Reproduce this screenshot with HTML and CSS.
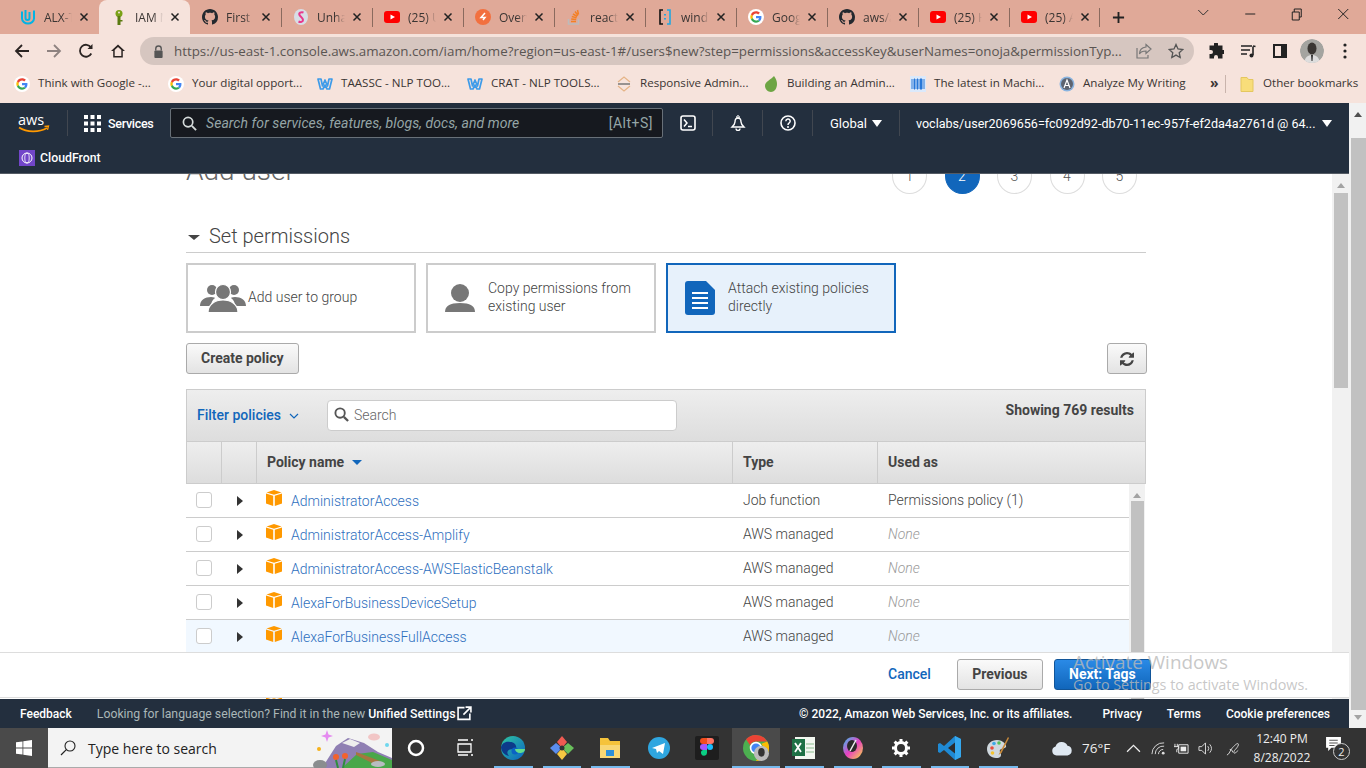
FILE: index.html
```html
<!DOCTYPE html>
<html lang="en">
<head>
<meta charset="utf-8">
<title>IAM Management Console</title>
<link rel="stylesheet" href="styles.css">
</head>
<body>
<svg class="defs" aria-hidden="true">
  <symbol id="i-gh" viewBox="0 0 16 16"><path fill="#24292f" d="M8 0C3.58 0 0 3.58 0 8c0 3.54 2.29 6.53 5.47 7.59.4.07.55-.17.55-.38 0-.19-.01-.82-.01-1.49-2.01.37-2.53-.49-2.69-.94-.09-.23-.48-.94-.82-1.13-.28-.15-.68-.52-.01-.53.63-.01 1.08.58 1.23.82.72 1.21 1.87.87 2.33.66.07-.52.28-.87.51-1.07-1.78-.2-3.64-.89-3.64-3.95 0-.87.31-1.59.82-2.15-.08-.2-.36-1.02.08-2.12 0 0 .67-.21 2.2.82.64-.18 1.32-.27 2-.27.68 0 1.36.09 2 .27 1.53-1.04 2.2-.82 2.2-.82.44 1.1.16 1.92.08 2.12.51.56.82 1.27.82 2.15 0 3.07-1.87 3.75-3.65 3.95.29.25.54.73.54 1.48 0 1.07-.01 1.93-.01 2.2 0 .21.15.46.55.38A8.013 8.013 0 0016 8c0-4.42-3.58-8-8-8z"/></symbol>
  <symbol id="i-yt" viewBox="0 0 16 16"><rect y="2" width="16" height="12" rx="3" fill="#f00"/><path fill="#fff" d="M6.5 5.5v5L11 8z"/></symbol>
  <symbol id="i-g" viewBox="0 0 48 48"><circle cx="24" cy="24" r="24" fill="#fff"/><g transform="translate(7 7) scale(.71)"><path fill="#EA4335" d="M24 9.5c3.5 0 6.7 1.2 9.2 3.6l6.9-6.9C35.9 2.4 30.5 0 24 0 14.6 0 6.5 5.4 2.6 13.2l8 6.2C12.4 13.7 17.7 9.5 24 9.5z"/><path fill="#4285F4" d="M46.98 24.55c0-1.57-.15-3.09-.38-4.55H24v9.02h12.94c-.58 2.96-2.26 5.48-4.78 7.18l7.73 6c4.51-4.18 7.09-10.36 7.09-17.65z"/><path fill="#FBBC05" d="M10.53 28.59A14.5 14.5 0 0 1 9.77 24c0-1.6.27-3.14.76-4.59l-7.98-6.19A23.9 23.9 0 0 0 0 24c0 3.88.92 7.54 2.56 10.78z"/><path fill="#34A853" d="M24 48c6.48 0 11.93-2.13 15.89-5.81l-7.73-6c-2.15 1.45-4.92 2.3-8.16 2.3-6.26 0-11.57-4.22-13.47-9.91l-7.98 6.19C6.51 42.62 14.62 48 24 48z"/></g></symbol>
  <symbol id="i-w" viewBox="0 0 16 16"><path fill="none" stroke="#3d9be9" stroke-width="1.700" stroke-linejoin="round" d="M1 3h3l1.500 7 2.500-6 2.500 6L12 3h3l-2.500 10H10L8 9l-2 4H3.500z"/></symbol>
  <symbol id="i-close" viewBox="0 0 10 10"><path d="M1.5 1.5l7 7M8.5 1.5l-7 7" stroke="#222" stroke-width="1.5" fill="none"/></symbol>
  <symbol id="i-cube" viewBox="0 0 16 16"><path fill="#f90" d="M8 0l7.5 2.4L8 4.8.5 2.4z"/><path fill="#f90" d="M0 3.4l7.2 2.3V16L0 13.6zM16 3.4L8.8 5.7V16l7.2-2.4z"/></symbol>
  <symbol id="i-caret" viewBox="0 0 8 10"><path fill="#333" d="M1 0l6 5-6 5z"/></symbol>
</svg>

<header class="tabstrip">
  <div class="tab"><svg class="fav" viewBox="0 0 16 16"><path fill="none" stroke="#02b3e4" stroke-width="2" d="M2 2.5v7c0 3 3 5 6 5s6-2 6-5v-8"/><path fill="none" stroke="#02b3e4" stroke-width="2" d="M5.5 1v8c0 1.500 1 2 2 2s2-.5 2-2V3"/></svg><span class="tab-title">ALX-T</span><svg class="tab-x"><use href="#i-close"/></svg></div>
  <div class="tab tab-active"><svg class="fav" viewBox="0 0 16 16"><circle cx="8" cy="4.500" r="3.500" fill="#7aa116"/><rect x="6.500" y="7" width="3" height="9" fill="#5a7a10"/><rect x="9" y="11" width="2.500" height="1.500" fill="#5a7a10"/><circle cx="8" cy="3.500" r="1" fill="#f6e3dc"/></svg><span class="tab-title">IAM M</span><svg class="tab-x"><use href="#i-close"/></svg></div>
  <div class="tab"><svg class="fav"><use href="#i-gh"/></svg><span class="tab-title">First C</span><svg class="tab-x"><use href="#i-close"/></svg></div>
  <div class="tab tab-sep"><svg class="fav" viewBox="0 0 16 16"><ellipse cx="8" cy="8" rx="7" ry="8" fill="#d8dde6"/><path fill="none" stroke="#e8388c" stroke-width="2" d="M10.500 3.500C8 2.500 5.500 4 6.500 6c1 2 3.500 2.500 3.500 5 0 2-2.500 2.500-4.500 1.500"/></svg><span class="tab-title">Unhandled</span><svg class="tab-x"><use href="#i-close"/></svg></div>
  <div class="tab tab-sep"><svg class="fav"><use href="#i-yt"/></svg><span class="tab-title">(25) U</span><svg class="tab-x"><use href="#i-close"/></svg></div>
  <div class="tab tab-sep"><svg class="fav" viewBox="0 0 16 16"><circle cx="8" cy="8" r="8" fill="#f2703f"/><path fill="none" stroke="#fff" stroke-width="1.500" d="M10 4L6 8.500h4L8 11"/></svg><span class="tab-title">Overview</span><svg class="tab-x"><use href="#i-close"/></svg></div>
  <div class="tab tab-sep"><svg class="fav" viewBox="0 0 16 16"><path fill="none" stroke="#bcbbbb" stroke-width="1.500" d="M2.500 10v5h10v-5"/><path fill="none" stroke="#f48024" stroke-width="1.500" d="M5 12.500h5M5.200 10l5 .6M5.800 7.500l4.800 1.400M7 5l4.200 2.500M9 2.500l3 4M11.500 1l1 4.500"/></svg><span class="tab-title">react</span><svg class="tab-x"><use href="#i-close"/></svg></div>
  <div class="tab tab-sep"><svg class="fav" viewBox="0 0 16 16"><path fill="none" stroke="#111" stroke-width="1.600" d="M6 1H3v14h3"/><path fill="none" stroke="#22a7e0" stroke-width="1.600" d="M10 1h3v14h-3"/><path stroke="#22a7e0" stroke-width="2" d="M8 5v1.500M8 9v1.500"/></svg><span class="tab-title">windi</span><svg class="tab-x"><use href="#i-close"/></svg></div>
  <div class="tab tab-sep"><svg class="fav"><use href="#i-g"/></svg><span class="tab-title">Google</span><svg class="tab-x"><use href="#i-close"/></svg></div>
  <div class="tab tab-sep"><svg class="fav"><use href="#i-gh"/></svg><span class="tab-title">aws/a</span><svg class="tab-x"><use href="#i-close"/></svg></div>
  <div class="tab tab-sep"><svg class="fav"><use href="#i-yt"/></svg><span class="tab-title">(25) H</span><svg class="tab-x"><use href="#i-close"/></svg></div>
  <div class="tab tab-sep tab-end"><svg class="fav"><use href="#i-yt"/></svg><span class="tab-title">(25) A</span><svg class="tab-x"><use href="#i-close"/></svg></div>
  <svg class="newtab" viewBox="0 0 14 14"><path d="M7 1v12M1 7h12" stroke="#222" stroke-width="2"/></svg>
  <div class="winctl">
    <svg class="wc" viewBox="0 0 46 28"><path d="M18 10l5 5 5-5" fill="none" stroke="#333"/></svg>
    <svg class="wc" viewBox="0 0 46 28"><path d="M18 14h10" stroke="#222"/></svg>
    <svg class="wc" viewBox="0 0 46 28"><path d="M19 12h7v8h-7zM21 12V9h7v8h-2" fill="none" stroke="#222"/></svg>
    <svg class="wc" viewBox="0 0 46 28"><path d="M18 9l10 10M28 9L18 19" stroke="#222" fill="none"/></svg>
  </div>
</header>

<nav class="toolbar">
  <svg class="tb-ic" viewBox="0 0 16 16"><path d="M15 8H2M8 2L2 8l6 6" fill="none" stroke="#2b2422" stroke-width="1.800"/></svg>
  <svg class="tb-ic" viewBox="0 0 16 16"><path d="M1 8h13M8 2l6 6-6 6" fill="none" stroke="#8e8280" stroke-width="1.800"/></svg>
  <svg class="tb-ic" viewBox="0 0 16 16"><path d="M13.300 10.500A6 6 0 1 1 13 4.500" fill="none" stroke="#2b2422" stroke-width="1.800"/><path d="M14.500 1v5h-5z" fill="#2b2422"/></svg>
  <svg class="tb-ic" viewBox="0 0 16 16"><path d="M8 1.500L1 8h2.200v6.500h9.600V8H15zM8 4l3.300 3v6H4.700V7z" fill="#2b2422" fill-rule="evenodd"/></svg>
  <div class="omnibox">
    <svg class="lock" viewBox="0 0 12 14"><path d="M3 6V4a3 3 0 0 1 6 0v2" fill="none" stroke="#555" stroke-width="1.500"/><rect x="1.500" y="6" width="9" height="8" rx="1" fill="#555"/></svg>
    <span class="url">https://us-east-1.console.aws.amazon.com/iam/home?region=us-east-1#/users$new?step=permissions&amp;accessKey&amp;userNames=onoja&amp;permissionTyp...</span>
    <svg class="omni-ic" viewBox="0 0 16 16"><path d="M10 1.500L15 6l-5 4.500V8C6.500 8 4.500 9 3.500 11c0-4 2.500-6.500 6.500-7z" fill="none" stroke="#777" stroke-width="1.200"/><path d="M1 5v10h11v-3" fill="none" stroke="#777" stroke-width="1.200"/></svg>
    <svg class="omni-ic" viewBox="0 0 16 16"><path d="M8 1.500l2 4.500 4.800.5-3.600 3.200 1 4.800L8 12.100l-4.200 2.400 1-4.800L1.200 6.500 6 6z" fill="none" stroke="#555" stroke-width="1.300"/></svg>
  </div>
  <svg class="tb-ic tb-puzzle" viewBox="0 0 16 16"><path fill="#222" d="M6 1a2 2 0 0 1 4 0v1.500h4.500V7H16a2 2 0 0 1 0 4h-1.500v4.500H10V14a2 2 0 0 0-4 0v1.500H1.500V11H3a2 2 0 0 0 0-4H1.500V2.500H6z"/></svg>
  <svg class="tb-ic" viewBox="0 0 16 16"><path d="M1 3h11M1 7h9M1 11h6" stroke="#222" stroke-width="1.500"/><path d="M13 3.500V12" stroke="#222" stroke-width="1.600"/><circle cx="11.500" cy="12.500" r="2" fill="#222"/><path d="M13 3l2.500.5" stroke="#222" stroke-width="1.500"/></svg>
  <svg class="tb-ic" viewBox="0 0 16 16"><path fill="#222" fill-rule="evenodd" d="M1 1h14v14H1zm2 2v10h6V3z"/></svg>
  <svg class="avatar" viewBox="0 0 24 24"><circle cx="12" cy="12" r="12" fill="#a4a4a0"/><ellipse cx="12" cy="9.500" rx="4.500" ry="6" fill="#3a3633"/><path d="M4 24c1-6 4-8 8-8s7 2 8 8z" fill="#ddd"/><path d="M11 16h2l-.5 6h-1z" fill="#333"/></svg>
  <svg class="tb-dots" viewBox="0 0 4 16"><circle cx="2" cy="2" r="1.600" fill="#222"/><circle cx="2" cy="8" r="1.600" fill="#222"/><circle cx="2" cy="14" r="1.600" fill="#222"/></svg>
</nav>

<div class="bookmarks">
  <div class="bm"><svg class="bm-ic"><use href="#i-g"/></svg><span>Think with Google -...</span></div>
  <div class="bm"><svg class="bm-ic"><use href="#i-g"/></svg><span>Your digital opport...</span></div>
  <div class="bm"><svg class="bm-ic"><use href="#i-w"/></svg><span>TAASSC - NLP TOO...</span></div>
  <div class="bm"><svg class="bm-ic"><use href="#i-w"/></svg><span>CRAT - NLP TOOLS...</span></div>
  <div class="bm"><svg class="bm-ic" viewBox="0 0 16 16"><path d="M2 6l6-5 6 5M2 10l6 5 6-5" fill="none" stroke="#e5b487" stroke-width="1.200"/><path d="M2 8h12" stroke="#777" stroke-width="1.500"/></svg><span>Responsive Admin...</span></div>
  <div class="bm"><svg class="bm-ic" viewBox="0 0 16 16"><path fill="#6da544" d="M11 0c2 3 3 5 3 8 0 5-3 8-6 8s-6-3-6-6c0-5 6-6 9-10z"/></svg><span>Building an Admin...</span></div>
  <div class="bm"><svg class="bm-ic" viewBox="0 0 16 16"><rect width="16" height="16" fill="#dbe9fb"/><path d="M2 3v10M14 3v10M4 3h1v10H4zM7 3h1v10H7zM10 3h2v10h-2z" stroke="#2979d8" fill="#2979d8"/></svg><span>The latest in Machi...</span></div>
  <div class="bm"><svg class="bm-ic" viewBox="0 0 16 16"><circle cx="8" cy="8" r="7.500" fill="#8ab4e0"/><circle cx="8" cy="8" r="6" fill="#5d6470"/><path d="M5 12l3-8 3 8M6 9.500h4" fill="none" stroke="#fff" stroke-width="1.200"/></svg><span>Analyze My Writing</span></div>
  <div class="bm-more">»</div>
  <div class="bm bm-other"><svg class="bm-ic" viewBox="0 0 16 16"><path d="M2 1.500h6l1.500 2H14v12H2z" fill="#f8dd7a" stroke="#e4c75f"/></svg><span>Other bookmarks</span></div>
</div>

<div class="viewport">
  <div class="console">
    <div class="awsnav">
      <div class="nav-main">
        <svg class="awslogo" viewBox="0 0 32 20"><text x="0" y="11.500" class="awslogo-t">aws</text><path d="M1 14.500c8 5 20 5 28 .5" fill="none" stroke="#f90" stroke-width="1.700"/><path d="M26.500 13.500l4-.5-1 3.800" fill="none" stroke="#f90" stroke-width="1.300"/></svg>
        <span class="nav-sep nav-sep-a"></span>
        <svg class="gridic" viewBox="0 0 17 17"><path fill="#fff" d="M0 0h4v4H0zM6.500 0h4v4h-4zM13 0h4v4h-4zM0 6.500h4v4H0zM6.500 6.500h4v4h-4zM13 6.500h4v4h-4zM0 13h4v4H0zM6.500 13h4v4h-4zM13 13h4v4h-4z"/></svg>
        <span class="nav-services">Services</span>
        <div class="nav-search">
          <svg class="nav-search-ic" viewBox="0 0 16 16"><circle cx="6.500" cy="6.500" r="5" fill="none" stroke="#d5dbdb" stroke-width="1.800"/><path d="M10.500 10.500L15 15" stroke="#d5dbdb" stroke-width="2"/></svg>
          <span class="nav-search-ph">Search for services, features, blogs, docs, and more</span>
          <span class="nav-search-key">[Alt+S]</span>
        </div>
        <svg class="nav-ic nav-ic-shell" viewBox="0 0 16 16"><rect x="1" y="1" width="14" height="14" rx="2" fill="none" stroke="#fff" stroke-width="1.600"/><path d="M4 4.500L7 8l-3 3.500M8 11.500h4" fill="none" stroke="#fff" stroke-width="1.500"/></svg>
        <span class="nav-sep"></span>
        <svg class="nav-ic" viewBox="0 0 16 16"><circle cx="8" cy="2" r="1.300" fill="none" stroke="#fff"/><path d="M8 3C5.500 3 5 5 5 7c0 2-1.500 3.500-3 5h12c-1.500-1.500-3-3-3-5 0-2-.5-4-3-4z" fill="none" stroke="#fff" stroke-width="1.400"/><path d="M6 13.500a2 2 0 0 0 4 0" fill="none" stroke="#fff" stroke-width="1.400"/></svg>
        <span class="nav-sep"></span>
        <svg class="nav-ic" viewBox="0 0 16 16"><circle cx="8" cy="8" r="7" fill="none" stroke="#fff" stroke-width="1.600"/><path d="M5.800 6.200A2.200 2.200 0 1 1 9 8.200c-.7.400-1 .8-1 1.800" fill="none" stroke="#fff" stroke-width="1.500"/><circle cx="8" cy="12" r="1" fill="#fff"/></svg>
        <span class="nav-sep"></span>
        <span class="nav-global">Global</span><span class="nav-tri"></span>
        <span class="nav-sep nav-sep-b"></span>
        <span class="nav-user">voclabs/user2069656=fc092d92-db70-11ec-957f-ef2da4a2761d @ 64...</span><span class="nav-tri"></span>
      </div>
      <div class="nav-fav">
        <svg class="cf-ic" viewBox="0 0 16 16"><rect width="16" height="16" fill="#7246c9"/><circle cx="8" cy="8" r="5" fill="none" stroke="#fff"/><ellipse cx="8" cy="8" rx="2.200" ry="5" fill="none" stroke="#fff" stroke-width=".8"/></svg>
        <span>CloudFront</span>
      </div>
    </div>

    <div class="content">
      <main class="wizard">
        <div class="wizard-head">
          <h1 class="wizard-title">Add user</h1>
          <ol class="steps">
            <li class="step">1</li><li class="step step-on">2</li><li class="step">3</li><li class="step">4</li><li class="step">5</li>
          </ol>
        </div>
        <h2 class="section"><span class="section-tri"></span>Set permissions</h2>
        <div class="cards">
          <div class="card">
            <svg class="card-ic card-ic-group" viewBox="0 0 46 30"><g fill="#777"><circle cx="12" cy="7" r="5"/><circle cx="34" cy="7" r="5"/><path d="M0 23c0-6 5-9 11-9 3 0 4 1 4 1-3 2-4 5-4 8z"/><path d="M46 23c0-6-5-9-11-9-3 0-4 1-4 1 3 2 4 5 4 8z"/></g><circle cx="23" cy="9" r="7.500" fill="#777" stroke="#fff" stroke-width="1.200"/><path d="M8 29.500c0-8 7-12.500 15-12.500s15 4.500 15 12.500z" fill="#777" stroke="#fff" stroke-width="1.200"/></svg>
            <span class="card-label">Add user to group</span>
          </div>
          <div class="card card-wide">
            <svg class="card-ic card-ic-user" viewBox="0 0 30 28"><circle cx="15" cy="9" r="9" fill="#777"/><path d="M0 28c0-6 5-9 15-9s15 3 15 9z" fill="#777"/></svg>
            <span class="card-label">Copy permissions from existing user</span>
          </div>
          <div class="card card-on card-wide">
            <svg class="card-ic card-ic-doc" viewBox="0 0 30 34"><path fill="#1166bb" d="M3 0h18l9 9v22a3 3 0 0 1-3 3H3a3 3 0 0 1-3-3V3a3 3 0 0 1 3-3z"/><path stroke="#fff" stroke-width="2" d="M7 12h16M7 17h16M7 22h16M7 27h16"/></svg>
            <span class="card-label">Attach existing policies directly</span>
          </div>
        </div>
        <div class="policy-actions">
          <button class="btn">Create policy</button>
          <button class="btn btn-icon" aria-label="Refresh"><svg viewBox="0 0 1536 1536" class="refresh-ic"><path fill="#444" d="M1511 928q0 5-1 7-64 268-268 434.500t-478 166.500q-146 0-282.500-55t-243.500-157l-129 129q-19 19-45 19t-45-19-19-45v-448q0-26 19-45t45-19h448q26 0 45 19t19 45-19 45l-137 137q71 66 161 102t187 36q134 0 250-65t186-179q11-17 53-117 8-23 30-23h192q13 0 22.500 9.500t9.500 22.500zm25-800v448q0 26-19 45t-45 19h-448q-26 0-45-19t-19-45 19-45l138-138q-148-137-349-137-134 0-250 65t-186 179q-11 17-53 117-8 23-30 23h-199q-13 0-22.500-9.500t-9.500-22.500v-7q65-268 270-434.500t480-166.500q146 0 284 55.500t245 156.500l130-129q19-19 45-19t45 19 19 45z"/></svg></button>
        </div>
        <section class="ptable">
          <div class="ptable-filter">
            <span class="filter-label">Filter policies</span>
            <svg class="filter-chev" viewBox="0 0 10 6"><path d="M1 1l4 4 4-4" fill="none" stroke="#1166bb" stroke-width="1.200"/></svg>
            <div class="filter-search">
              <svg class="filter-search-ic" viewBox="0 0 16 16"><circle cx="6.500" cy="6.500" r="5" fill="none" stroke="#555" stroke-width="2"/><path d="M10.500 10.500L15 15" stroke="#555" stroke-width="2.400"/></svg>
              <span>Search</span>
            </div>
            <span class="filter-count">Showing 769 results</span>
          </div>
          <div class="ptable-head">
            <div class="th"></div><div class="th"></div>
            <div class="th">Policy name<span class="sort-tri"></span></div>
            <div class="th">Type</div>
            <div class="th">Used as</div>
          </div>
          <div class="ptable-body">
            <div class="rows">
              <div class="row"><span class="cb"></span><svg class="row-caret"><use href="#i-caret"/></svg><div class="cell-name"><svg class="cube"><use href="#i-cube"/></svg><a class="plink">AdministratorAccess</a></div><div class="cell">Job function</div><div class="cell">Permissions policy (1)</div></div>
              <div class="row"><span class="cb"></span><svg class="row-caret"><use href="#i-caret"/></svg><div class="cell-name"><svg class="cube"><use href="#i-cube"/></svg><a class="plink">AdministratorAccess-Amplify</a></div><div class="cell">AWS managed</div><div class="cell cell-none">None</div></div>
              <div class="row"><span class="cb"></span><svg class="row-caret"><use href="#i-caret"/></svg><div class="cell-name"><svg class="cube"><use href="#i-cube"/></svg><a class="plink">AdministratorAccess-AWSElasticBeanstalk</a></div><div class="cell">AWS managed</div><div class="cell cell-none">None</div></div>
              <div class="row"><span class="cb"></span><svg class="row-caret"><use href="#i-caret"/></svg><div class="cell-name"><svg class="cube"><use href="#i-cube"/></svg><a class="plink">AlexaForBusinessDeviceSetup</a></div><div class="cell">AWS managed</div><div class="cell cell-none">None</div></div>
              <div class="row row-hover"><span class="cb"></span><svg class="row-caret"><use href="#i-caret"/></svg><div class="cell-name"><svg class="cube"><use href="#i-cube"/></svg><a class="plink">AlexaForBusinessFullAccess</a></div><div class="cell">AWS managed</div><div class="cell cell-none">None</div></div>
              <div class="row"></div>
              <div class="row"><span></span><span></span><div class="cell-name"><svg class="cube"><use href="#i-cube"/></svg></div></div>
            </div>
            <div class="tscroll"><span class="sb-up"></span><span class="tscroll-thumb"></span></div>
          </div>
        </section>
      </main>
      <div class="inner-scroll"><span class="sb-up"></span><span class="inner-thumb"></span></div>
      <div class="actionbar">
        <a class="btn-cancel">Cancel</a>
        <button class="btn btn-prev">Previous</button>
        <button class="btn btn-primary">Next: Tags</button>
      </div>
    </div>

    <footer class="awsfoot">
      <span class="foot-fb">Feedback</span>
      <span class="foot-msg">Looking for language selection? Find it in the new <b class="foot-b">Unified Settings</b></span>
      <svg class="foot-ext" viewBox="0 0 14 14"><path d="M7 1.500H1v11h11V7" fill="none" stroke="#fff" stroke-width="1.500"/><path d="M6 8L12.500 1.500M8 1h5v5" fill="none" stroke="#fff" stroke-width="1.500"/></svg>
      <span class="foot-copy">© 2022, Amazon Web Services, Inc. or its affiliates.</span>
      <span class="foot-link foot-privacy">Privacy</span>
      <span class="foot-link foot-terms">Terms</span>
      <span class="foot-link">Cookie preferences</span>
    </footer>
  </div>
  <div class="outer-scroll"><span class="sb-up sb-up-dark"></span><span class="outer-thumb"></span><span class="sb-down"></span></div>
</div>

<div class="activate">
  <div class="activate-a">Activate Windows</div>
  <div class="activate-b">Go to Settings to activate Windows.</div>
</div>

<footer class="taskbar">
  <div class="start"><svg viewBox="0 0 16 16" class="start-ic"><path fill="#fff" d="M0 2.300L6.500 1.400v6.200H0zM7.300 1.300L16 0v7.600H7.300zM0 8.400h6.500v6.200L0 13.700zM7.300 8.400H16V16l-8.700-1.300z"/></svg></div>
  <div class="tsearch">
    <svg class="tsearch-ic" viewBox="0 0 16 16"><circle cx="10" cy="6" r="5" fill="none" stroke="#222" stroke-width="1.100"/><path d="M6.300 9.700L1 15" stroke="#222" stroke-width="1.200"/></svg>
    <span class="tsearch-t">Type here to search</span>
    <svg class="tsearch-art" viewBox="0 0 80 40"><path d="M15 2l1.500 4.500L21 8l-4.500 1.500L15 14l-1.500-4.500L9 8l4.500-1.500z" fill="#e58af0"/><circle cx="7" cy="21" r="2" fill="#f6b21b"/><circle cx="75" cy="17" r="2" fill="#6fd7ee"/><ellipse cx="62" cy="9" rx="6" ry="3.500" fill="#f2c6c6"/><path d="M10 40l14-22 12-8 16 5 14 9 14 6v10z" fill="#8f7fb3"/><path d="M30 15l8-4 10 4-6 4z" fill="#eee"/><path d="M30 40l15-14 16-2 19 8v8z" fill="#49a749"/><path d="M44 24l24 9 2 3-6 1-20-10z" fill="#a5763f"/><circle cx="24" cy="29" r="3" fill="#f2622e"/><circle cx="33" cy="28" r="3" fill="#f2622e"/><path d="M24 32l2 8M33 31l-2 9" stroke="#2f8f3d" stroke-width="2"/><ellipse cx="8" cy="37" rx="7" ry="5" fill="#8a8d8f"/><ellipse cx="66" cy="36" rx="7" ry="3" fill="#b8bcc0"/></svg>
  </div>
  <div class="tapps">
    <div class="tapp"><svg class="tapp-ic" viewBox="0 0 20 20"><circle cx="10" cy="10" r="7" fill="none" stroke="#fff" stroke-width="2.500"/></svg></div>
    <div class="tapp"><svg class="tapp-ic" viewBox="0 0 20 20"><path d="M3 2h10M3 17h10M3 6h13v8H3z" fill="none" stroke="#fff" stroke-width="1.300"/><path d="M16 2h2M16 17h2" stroke="#fff" stroke-width="1.300"/></svg></div>
    <div class="tapp tapp-open"><svg class="tapp-ic tapp-big" viewBox="0 0 24 24"><defs><linearGradient id="edg" x1="0" y1="0" x2="1" y2="1"><stop offset="0" stop-color="#2fc6a0"/><stop offset="1" stop-color="#0a62c4"/></linearGradient></defs><circle cx="12" cy="12" r="12" fill="url(#edg)"/><path d="M12 13c-6 0-7 4-4 7-5-1-8-5-8-9 1-3 4-6 9-5 5 0 7 4 6 7z" fill="#0d3a8a"/><circle cx="14" cy="15" r="3.500" fill="#0a62c4"/><path d="M24 13c0 3-3 4-5 4-3 0-5-2-5-4h10z" fill="#64dd8c"/></svg></div>
    <div class="tapp tapp-open"><svg class="tapp-ic tapp-big" viewBox="0 0 24 24"><path d="M12 0l5 6-5 6-5-6z" fill="#ef5b52"/><path d="M0 12l6-5 6 5-6 6z" fill="#5b8def"/><path d="M24 12l-6-5-6 5 6 6z" fill="#69c05c"/><path d="M12 24l-5-6 5-6 5 6z" fill="#f5c842"/><circle cx="12" cy="12" r="2.500" fill="#333"/></svg></div>
    <div class="tapp tapp-open"><svg class="tapp-ic tapp-big" viewBox="0 0 24 24"><path d="M2 2h8l2 3h10v17H2z" fill="#f5c33b"/><rect x="2" y="9" width="20" height="13" fill="#f8d775"/><rect x="8" y="14" width="8" height="6" fill="#2d8fd8"/></svg></div>
    <div class="tapp"><svg class="tapp-ic tapp-big" viewBox="0 0 24 24"><circle cx="12" cy="12" r="11" fill="#2fa6e0"/><path d="M5 12l13-5-2 11-4-3-2 2-1-4z" fill="#fff"/></svg></div>
    <div class="tapp"><svg class="tapp-ic tapp-big" viewBox="0 0 24 24"><rect width="24" height="24" rx="2" fill="#1e1e1e"/><path d="M8 2h4v6H8a3 3 0 0 1 0-6z" fill="#f24e1e"/><path d="M16 2h-4v6h4a3 3 0 0 0 0-6z" fill="#ff7262"/><path d="M8 8h4v6H8a3 3 0 0 1 0-6z" fill="#a259ff"/><circle cx="15" cy="11" r="3" fill="#1abcfe"/><path d="M8 14h4v3a3 3 0 1 1-4-3z" fill="#0acf83"/></svg></div>
    <div class="tapp tapp-open tapp-active"><svg class="tapp-ic tapp-chrome" viewBox="0 0 24 24"><circle cx="12" cy="12" r="12" fill="#4caf50"/><path d="M12 0a12 12 0 0 1 10.400 6H12a6 6 0 0 0-5.500 3.500L2.800 4A12 12 0 0 1 12 0z" fill="#ea4335"/><path d="M22.400 6A12 12 0 0 1 12 24l5-8.500A6 6 0 0 0 17 8z" fill="#fbbc05"/><circle cx="12" cy="12" r="5" fill="#4285f4" stroke="#fff" stroke-width="1.500"/><circle cx="17" cy="17" r="7" fill="#bbb"/><ellipse cx="17" cy="16" rx="3" ry="4" fill="#333"/></svg></div>
    <div class="tapp tapp-open"><svg class="tapp-ic tapp-big" viewBox="0 0 24 24"><rect x="3" y="1" width="20" height="22" fill="#f3f7f0"/><path d="M14 8h8M14 12h8M14 16h8" stroke="#8bbd8f"/><rect y="3" width="13" height="17" fill="#1e7145"/><path d="M3 7l6 9M9 7l-6 9" stroke="#fff" stroke-width="1.800"/></svg></div>
    <div class="tapp tapp-open"><svg class="tapp-ic tapp-big" viewBox="0 0 24 24"><defs><linearGradient id="col" x1="0" y1="0" x2="1" y2="1"><stop offset="0" stop-color="#31c6f0"/><stop offset=".5" stop-color="#e93fc2"/><stop offset="1" stop-color="#f7e13f"/></linearGradient></defs><ellipse cx="12" cy="12" rx="10" ry="11" fill="url(#col)"/><ellipse cx="11" cy="10" rx="5" ry="6" fill="#2a2a2a"/><path d="M15 4l-6 11" stroke="#eee" stroke-width="1.500"/></svg></div>
    <div class="tapp tapp-open"><svg class="tapp-ic" viewBox="0 0 20 20"><circle cx="10" cy="10" r="5.500" fill="none" stroke="#fff" stroke-width="3"/><path d="M10 1v4M10 15v4M1 10h4M15 10h4M3.600 3.600l2.800 2.800M13.600 13.600l2.800 2.800M3.600 16.400l2.800-2.800M13.600 6.400l2.800-2.800" stroke="#fff" stroke-width="3"/></svg></div>
    <div class="tapp tapp-open"><svg class="tapp-ic tapp-big" viewBox="0 0 24 24"><path d="M17 0l6 3v18l-6 3L6 14l-4 3-2-1V8l2-1 4 3z" fill="#1f8ad4"/><path d="M17 6.500v11L10 12z" fill="#2c2c2c"/><path d="M17 0l6 3v18l-6 3z" fill="#35a8ee"/></svg></div>
    <div class="tapp tapp-open"><svg class="tapp-ic tapp-big" viewBox="0 0 24 24"><path d="M11 4C5 4 1 8 1 13s4 9 9 9 5-2 5-4-2-2-1-4 5-1 6-3-3-7-9-7z" fill="#cfd8de"/><circle cx="6" cy="12" r="1.800" fill="#e74c3c"/><circle cx="8" cy="7.500" r="1.800" fill="#3ea9e6"/><circle cx="13" cy="7" r="1.800" fill="#55c057"/><circle cx="6.500" cy="17" r="1.800" fill="#f4c430"/><path d="M22 1l-8 15-1.500 3 3-2L23 2z" fill="#c98a3a"/></svg></div>
  </div>
  <div class="tray">
    <svg class="tray-cloud" viewBox="0 0 24 16"><path d="M6 15.500a5 5 0 0 1-1-9.800A7 7 0 0 1 18 5a5.300 5.300 0 0 1 0 10.500z" fill="#dfe8f1"/></svg>
    <span class="tray-temp">76°F</span>
    <svg class="tray-ic" viewBox="0 0 14 14"><path d="M1 10l6-6 6 6" fill="none" stroke="#eee" stroke-width="1.200"/></svg>
    <svg class="tray-ic" viewBox="0 0 16 16"><path d="M1 14A12 12 0 0 1 14 2M4.500 14a8.500 8.500 0 0 1 9.500-8.500M8 14a5 5 0 0 1 5-5" fill="none" stroke="#ddd" stroke-width="1"/><circle cx="13" cy="13" r="1.500" fill="#ddd"/></svg>
    <svg class="tray-ic" viewBox="0 0 16 16"><path d="M5 4h10v9H5z" fill="none" stroke="#eee"/><rect x="7" y="6" width="6" height="5" fill="#eee"/><path d="M1 3v3M3.500 3v3M0 6h5v2l-2 1v3" fill="none" stroke="#eee"/></svg>
    <svg class="tray-ic" viewBox="0 0 16 16"><path d="M1 6h3l4-4v12l-4-4H1z" fill="none" stroke="#ddd"/><path d="M10.500 5.500a4 4 0 0 1 0 5M12.500 3.500a7 7 0 0 1 0 9" fill="none" stroke="#ddd"/></svg>
    <svg class="tray-ic tray-pen" viewBox="0 0 16 16"><path d="M1 15c3-1 3-5 6-8s5-5 6-4-1 4-3 6-2 4-1 4 3-2 4-3M4 9c2 0 3 1 3 3" fill="none" stroke="#ddd"/></svg>
    <div class="clock"><span>12:40 PM</span><span>8/28/2022</span></div>
    <div class="notif"><svg class="notif-ic" viewBox="0 0 16 16"><path d="M1 1h14v10H6l-3 3v-3H1z" fill="#fff"/><path d="M4 4h8M4 6.500h8M4 9h5" stroke="#555"/></svg><span class="notif-n">2</span></div>
  </div>
</footer>
</body>
</html>
```

FILE: styles.css
```css
* { box-sizing: border-box; }
html, body { margin: 0; padding: 0; }
body {
  width: 1366px;
  height: 768px;
  overflow: hidden;
  display: flex;
  flex-direction: column;
  position: relative;
  background: #fff;
  font-family: Roboto, "Liberation Sans", sans-serif;
  color: #444;
}
.defs { display: none; }

/* Chrome tab strip */
.tabstrip {
  height: 34px;
  flex: none;
  display: flex;
  align-items: stretch;
  padding-left: 8px;
  background: #e0a998;
  font-family: "Open Sans", sans-serif;
  font-size: 12px;
  color: #3a3533;
}
.tab {
  width: 91px;
  flex: none;
  display: flex;
  align-items: center;
  padding-left: 12px;
  position: relative;
}
.tab-active {
  background: #f6e3dc;
  border-radius: 8px 8px 0 0;
}
.tab-sep::before {
  content: "";
  position: absolute;
  left: 0;
  top: 8px;
  height: 19px;
  width: 1px;
  background: #8a6a5e;
}
.tab-end::after {
  content: "";
  position: absolute;
  right: 0;
  top: 8px;
  height: 19px;
  width: 1px;
  background: #8a6a5e;
}
.fav { width: 16px; height: 16px; flex: none; }
.tab-title {
  width: 28px;
  margin-left: 8px;
  overflow: hidden;
  white-space: nowrap;
  -webkit-mask-image: linear-gradient(90deg, #000 65%, transparent);
  mask-image: linear-gradient(90deg, #000 65%, transparent);
}
.tab-x { width: 10px; height: 10px; margin-left: 7px; flex: none; }
.newtab { width: 13px; height: 13px; margin: 11px 0 0 12px; flex: none; }
.winctl { margin-left: auto; display: flex; align-items: flex-start; margin-right: 0; }
.wc { width: 46.5px; height: 28px; }

/* Toolbar */
.toolbar {
  height: 34px;
  flex: none;
  display: flex;
  align-items: center;
  padding-left: 14px;
  background: #f6e3dc;
}
.tb-ic { width: 16px; height: 16px; flex: none; margin-right: 16px; }
.omnibox {
  width: 1054px;
  height: 28px;
  flex: none;
  margin-left: -2px;
  margin-right: 14px;
  border-radius: 14px;
  background: #d6c6c0;
  display: flex;
  align-items: center;
  padding-left: 13px;
  padding-right: 10px;
  font-family: "Open Sans", sans-serif;
  font-size: 13.35px;
  color: #5a5552;
}
.lock { width: 11px; height: 13px; flex: none; }
.url { margin-left: 10px; white-space: nowrap; overflow: hidden; width: 962px; flex: none; }
.omni-ic { width: 16px; height: 16px; flex: none; }
.omni-ic + .omni-ic { margin-left: 16px; }
.avatar { width: 24px; height: 24px; border-radius: 50%; flex: none; margin-left: -4px; }
.tb-dots { width: 4px; height: 16px; margin-left: 19px; flex: none; }

/* Bookmarks */
.bookmarks {
  height: 35px;
  flex: none;
  display: grid;
  grid-template-columns: 154px 149px 150px 149px 147px 147px 149px 151px 29px auto;
  align-items: center;
  padding: 0 0 4px 14px;
  background: #f6e3dc;
  font-family: "Open Sans", sans-serif;
  font-size: 11.6px;
  color: #3a3533;
}
.bm { display: flex; align-items: center; gap: 8px; white-space: nowrap; }
.bm span { margin-top: -2px; }
.bm-ic { width: 16px; height: 16px; flex: none; }
.bm-more { font-weight: 700; font-size: 14px; position: relative; height: 21px; line-height: 19px; }
.bm-more::after {
  content: "";
  position: absolute;
  left: 15px;
  top: 2px;
  width: 1px;
  height: 18px;
  background: #c9b4ac;
}

/* Viewport */
.viewport { flex: 1; display: flex; min-height: 0; height: 625px; }
.console { flex: 1; min-width: 0; display: flex; flex-direction: column; }
.outer-scroll {
  width: 17px;
  flex: none;
  background: #f1f1f1;
  display: flex;
  flex-direction: column;
  align-items: center;
  position: relative;
}
.sb-up {
  display: block;
  flex: none;
  width: 0;
  height: 0;
  margin-top: 9px;
  border-left: 4px solid transparent;
  border-right: 4px solid transparent;
  border-bottom: 5px solid #a3a3a3;
}
.sb-up-dark { border-bottom-color: #505050; }
.outer-thumb { width: 15px; height: 572px; margin-top: 21px; background: #c1c1c1; margin-left: 1px; }
.sb-down {
  width: 0;
  height: 0;
  margin-top: 5px;
  border-left: 4px solid transparent;
  border-right: 4px solid transparent;
  border-top: 5px solid #a3a3a3;
}

/* AWS nav */
.awsnav { height: 71px; flex: none; background: #232f3e; border-bottom: 1px solid #545b64; color: #fff; }
.nav-main { height: 40px; display: flex; align-items: center; padding: 0 0 0 18px; font-family: Roboto, sans-serif; font-size: 13px; }
.awslogo { width: 32px; height: 20px; flex: none; }
.awslogo-t { font-family: "Open Sans", sans-serif; font-size: 14.500px; fill: #fff; }
.nav-sep { width: 1px; height: 26px; background: #414750; flex: none; margin: 0 17px 0 0; }
.nav-sep-a { margin-left: 17px; margin-right: 16px; }
.nav-sep-b { margin: 0 16px 0 17px; }
.gridic { width: 17px; height: 17px; flex: none; }
.nav-services { margin-left: 7px; width: 55px; flex: none; white-space: nowrap; font-size: 12.500px; letter-spacing: -.3px; font-weight: 500; }
.nav-search {
  width: 493px;
  height: 30px;
  flex: none;
  margin-left: 7px;
  margin-right: 17px;
  background: #16191f;
  border: 1px solid #687078;
  border-radius: 2px;
  display: flex;
  align-items: center;
  padding: 0 9px 0 11px;
  font-size: 14px;
  color: #95a5a6;
}
.nav-search-ic { width: 15px; height: 15px; flex: none; }
.nav-search-ph { margin-left: 9px; font-style: italic; white-space: nowrap; letter-spacing: .06px; }
.nav-search-key { margin-left: auto; white-space: nowrap; letter-spacing: .5px; }
.nav-ic { width: 16px; height: 16px; flex: none; margin-right: 16px; }
.nav-ic-shell { margin-right: 16px; }
.nav-global { white-space: nowrap; margin-right: 5px; }
.nav-tri { width: 0; height: 0; flex: none; border-left: 5px solid transparent; border-right: 5px solid transparent; border-top: 7px solid #fff; }
.nav-user { white-space: nowrap; margin-right: 6px; font-size: 12.550px; }
.nav-fav { height: 30px; display: flex; align-items: center; gap: 5px; padding-left: 19px; font-size: 12.300px; font-weight: 500; }
.cf-ic { width: 16px; height: 16px; flex: none; }

/* Content */
.content { flex: 1; min-height: 0; display: flex; position: relative; overflow: hidden; background: #fff; }
.wizard { flex: 1; min-width: 0; padding: 0 186px; }
.inner-scroll { width: 17px; flex: none; background: #f1f1f1; display: flex; flex-direction: column; align-items: center; }
.inner-thumb { width: 14px; height: 195px; margin-top: 5px; background: #c1c1c1; }
.wizard-head { display: flex; justify-content: space-between; align-items: flex-start; height: 36px; margin-top: -16px; }
.wizard-title { margin: -2px 0 0; font-size: 28px; line-height: 30px; font-weight: 300; color: #666; }
.steps { list-style: none; margin: 0; padding: 0 9px 0 0; display: flex; gap: 17.500px; }
.step {
  width: 35px;
  height: 36px;
  border-radius: 50%;
  border: 1px solid #ddd;
  display: flex;
  align-items: center;
  justify-content: center;
  font-size: 14px;
  font-weight: 300;
  color: #555;
  background: #fff;
}
.step-on { background: #1166bb; border-color: #1166bb; color: #fff; }
.section {
  margin: 30px 0 0;
  height: 29px;
  border-bottom: 1px solid #ccc;
  display: flex;
  align-items: center;
  font-size: 20px;
  line-height: 24px;
  font-weight: 300;
  color: #444;
  padding-bottom: 5px;
}
.section-tri { width: 0; height: 0; margin: 4px 9px 0 2px; border-left: 6px solid transparent; border-right: 6px solid transparent; border-top: 5px solid #444; }
.cards { display: flex; gap: 10px; margin-top: 10px; }
.card {
  width: 230px;
  height: 70px;
  border: 2px solid #ccc;
  display: flex;
  align-items: center;
  font-size: 14px;
  line-height: 18px;
  font-weight: 300;
  color: #444;
}
.card-label { margin-top: -2px; }
.card-on { border-color: #1166bb; background: #e7f1fb; }
.card-ic { flex: none; }
.card-ic-group { width: 46px; height: 30px; margin: 0 2px 0 12px; }
.card-ic-user { width: 30px; height: 28px; margin: 0 13px 0 17px; }
.card-ic-doc { width: 30px; height: 34px; margin: 0 13px 0 17px; }
.policy-actions { display: flex; justify-content: space-between; margin: 10px -1px 0 0; }
.btn {
  height: 31px;
  padding: 0 14px 2px;
  border: 1px solid #aaa;
  border-radius: 3px;
  background: linear-gradient(#fafafa, #e3e3e3);
  font-family: Roboto, sans-serif;
  font-size: 14px;
  font-weight: 700;
  color: #444;
}
.btn-icon { width: 40px; padding: 0; display: flex; align-items: center; justify-content: center; }
.refresh-ic { width: 14px; height: 14px; }
.ptable { margin-top: 15px; }
.ptable-filter {
  height: 52px;
  border: 1px solid #ccc;
  border-bottom: 0;
  background: linear-gradient(#eee, #ddd);
  display: flex;
  align-items: flex-start;
  padding-left: 10px;
  padding-right: 11px;
  font-size: 14px;
}
.filter-label { font-weight: 500; color: #1166bb; margin-top: 17px; }
.filter-chev { width: 10px; height: 6px; margin: 23px 0 0 8px; flex: none; }
.filter-search {
  width: 350px;
  height: 31px;
  flex: none;
  margin: 10px 0 0 28px;
  background: #fff;
  border: 1px solid #ccc;
  border-radius: 4px;
  display: flex;
  align-items: center;
  gap: 5px;
  padding: 0 0 2px 6px;
  font-weight: 300;
  color: #666;
}
.filter-search-ic { width: 15px; height: 15px; flex: none; }
.filter-count { margin-left: auto; margin-top: 12px; font-weight: 700; color: #444; white-space: nowrap; }
.ptable-head {
  height: 43px;
  display: grid;
  grid-template-columns: 34px 35px 476px 145px 1fr;
  border: 1px solid #ccc;
  background: linear-gradient(#eee, #ddd);
  font-size: 14px;
  font-weight: 700;
  color: #444;
}
.th { display: flex; align-items: center; padding: 0 0 2px 10px; border-left: 1px solid #ccc; white-space: nowrap; }
.th:first-child { border-left: 0; }
.sort-tri { width: 0; height: 0; margin: 2px 0 0 8px; border-left: 5px solid transparent; border-right: 5px solid transparent; border-top: 5px solid #1166bb; }
.ptable-body { display: flex; }
.rows { width: 943px; flex: none; }
.row {
  height: 34px;
  display: grid;
  grid-template-columns: 35px 35px 476px 145px 1fr;
  align-items: center;
  border-bottom: 1px solid #ccc;
  padding-bottom: 1px;
  font-size: 14px;
  font-weight: 300;
  color: #444;
}
.row-hover { background: #f1f8ff; }
.cb {
  width: 16px;
  height: 16px;
  margin-left: 10px;
  border: 1px solid #ccc;
  border-radius: 3px;
  background: #fff;
  align-self: center;
}
.row-caret { width: 8px; height: 10px; margin: 2px 0 0 15px; }
.cell-name { display: flex; align-items: center; padding-left: 10px; }
.cube { width: 16px; height: 16px; flex: none; margin-top: -5px; }
.plink { margin-left: 9px; margin-top: 1px; color: #2e6fbe; white-space: nowrap; }
.cell { padding-left: 11px; white-space: nowrap; }
.cell-none { font-style: italic; color: #999; }
.tscroll { width: 16px; flex: none; height: 240px; background: #f1f1f1; display: flex; flex-direction: column; align-items: center; }
.tscroll-thumb { width: 13px; height: 220px; margin-top: 3px; background: #c1c1c1; }

/* Overlay bar */
.actionbar {
  position: absolute;
  left: 0;
  right: 0;
  bottom: 1px;
  height: 46px;
  background: #fff;
  border-top: 1px solid #ddd;
  border-bottom: 1px solid #ddd;
  display: flex;
  align-items: center;
  padding: 0 0 1px 888px;
}
.btn-cancel { font-size: 14px; font-weight: 500; color: #1166bb; margin: -1px 26px 0 0; }
.btn-prev { width: 86px; padding: 0 0 1px; margin-right: 11px; }
.btn-primary {
  width: 97px;
  padding: 0 0 1px;
  border-color: #115599;
  background: linear-gradient(#2a8ae6, #1166bb);
  color: #fff;
}

/* AWS footer */
.awsfoot {
  height: 29px;
  flex: none;
  background: #232f3e;
  color: #fff;
  display: flex;
  align-items: center;
  padding-left: 20px;
  font-size: 12px;
  font-weight: 500;
  white-space: nowrap;
}
.foot-fb { margin-right: 25px; }
.foot-msg { color: #aab7b8; font-weight: 400; font-size: 12.250px; }
.foot-b { color: #fff; font-weight: 500; font-size: 12.300px; }
.foot-ext { width: 15px; height: 15px; margin-left: 2px; flex: none; }
.foot-copy { margin-left: auto; margin-right: 30px; }
.foot-privacy { margin-right: 25px; }
.foot-terms { margin-right: 25px; }
.foot-link:last-child { margin-right: 19px; }

/* Activate watermark */
.activate {
  position: absolute;
  left: 1073px;
  top: 650px;
  font-family: "Open Sans", sans-serif;
  color: rgba(185, 185, 185, .8);
  pointer-events: none;
}
.activate-a { font-size: 18.900px; line-height: 25px; }
.activate-b { font-size: 14.350px; line-height: 20px; }

/* Taskbar */
.taskbar {
  height: 40px;
  flex: none;
  display: flex;
  background: #333;
  color: #eee;
  font-family: "Open Sans", sans-serif;
}
.start { width: 48px; flex: none; background: #4a4a4a; display: flex; align-items: center; justify-content: center; }
.start-ic { width: 16px; height: 16px; }
.tsearch {
  width: 344px;
  flex: none;
  background: #f3f3f3;
  border-bottom: 1px solid #aaa;
  display: flex;
  align-items: center;
  padding-left: 12px;
  color: #222;
  position: relative;
}
.tsearch-ic { width: 16px; height: 16px; flex: none; }
.tsearch-t { margin: 2px 0 0 12px; font-size: 14px; }
.tsearch-art { width: 80px; height: 40px; margin-left: auto; flex: none; }
.tapps { display: grid; grid-template-columns: repeat(13, 48.500px); flex: none; }
.tapp { height: 40px; display: flex; align-items: center; justify-content: center; position: relative; }
.tapp-ic { width: 20px; height: 20px; }
.tapp-big { width: 24px; height: 24px; }
.tapp-chrome { width: 26px; height: 26px; }
.tapp-open::after {
  content: "";
  position: absolute;
  left: 5px;
  right: 5px;
  bottom: 0;
  height: 2px;
  background: #76b9ed;
}
.tapp-active { background: #4a4a4a; }
.tapp-active::after { left: 0; right: 0; }
.tray {
  flex: 1;
  display: grid;
  grid-template-columns: 22px 47px 26px 24px 23px 25px 30px 68px 50px;
  align-items: center;
  justify-items: center;
  font-size: 14px;
  padding-left: 28.500px;
}
.tray-cloud { width: 22px; height: 15px; }
.tray-temp { justify-self: start; padding-left: 9px; font-size: 13.500px; white-space: nowrap; }
.tray-ic { width: 15px; height: 15px; }
.clock { display: flex; flex-direction: column; align-items: center; font-size: 12px; line-height: 19px; white-space: nowrap; }
.notif { position: relative; justify-self: start; padding-left: 9px; height: 24px; }
.notif-ic { width: 17px; height: 17px; }
.notif-n {
  position: absolute;
  left: 17px;
  top: 7px;
  width: 17px;
  height: 17px;
  border: 1px solid #ccc;
  border-radius: 50%;
  background: #333;
  font-size: 11px;
  line-height: 15px;
  text-align: center;
}
```
